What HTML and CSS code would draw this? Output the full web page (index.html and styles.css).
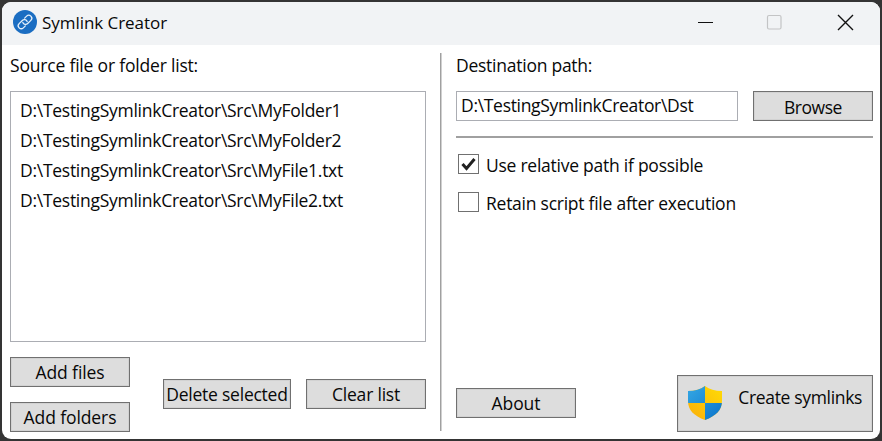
FILE: index.html
```html
<!DOCTYPE html>
<html lang="en">
<head>
<meta charset="utf-8">
<title>Symlink Creator</title>
<link rel="stylesheet" href="styles.css">
</head>
<body>
<div class="window">
  <header class="titlebar">
    <svg class="app-icon" width="24" height="24" viewBox="0 0 24 24">
      <circle cx="12" cy="12" r="12" fill="#1a6dc2"/>
      <g transform="rotate(-45 12 12)" fill="none" stroke="#e4effa" stroke-width="1.3" stroke-linecap="round">
        <path d="M9.500 15H6.700a3 3 0 0 1 0-6h4.500a3 3 0 0 1 2.700 4.200"/>
        <path d="M14.500 9h2.800a3 3 0 0 1 0 6h-4.500a3 3 0 0 1-2.700-4.200"/>
      </g>
    </svg>
    <h1 class="title">Symlink Creator</h1>
    <svg class="controls" width="160" height="20" viewBox="0 0 160 20" fill="none">
      <path d="M0 10.5h15" stroke="#111"/>
      <rect x="69.5" y="3.5" width="13.5" height="13.5" rx="1.5" stroke="#c3c4c5" stroke-width="1.2"/>
      <path d="M140 3l15 15M155 3l-15 15" stroke="#111" stroke-width="1.4"/>
    </svg>
  </header>
  <main class="content">
    <section class="sources">
      <div class="label source-label">Source file or folder list:</div>
      <ul class="list">
        <li>D:\TestingSymlinkCreator\Src\MyFolder1</li>
        <li>D:\TestingSymlinkCreator\Src\MyFolder2</li>
        <li>D:\TestingSymlinkCreator\Src\MyFile1.txt</li>
        <li>D:\TestingSymlinkCreator\Src\MyFile2.txt</li>
      </ul>
      <div class="list-actions">
        <div class="add-actions">
          <button>Add files</button>
          <button>Add folders</button>
        </div>
        <button class="delete">Delete selected</button>
        <button class="clear">Clear list</button>
      </div>
    </section>
    <div class="divider"></div>
    <section class="destination">
      <div class="label">Destination path:</div>
      <div class="path-row">
        <div class="field">D:\TestingSymlinkCreator\Dst</div>
        <button class="browse">Browse</button>
      </div>
      <div class="rule"></div>
      <div class="option">
        <span class="box"><svg width="19" height="18" viewBox="0 0 19 18"><path d="M3.5 9l4 4.5L15.500 4" fill="none" stroke="#212121" stroke-width="3"/></svg></span>
        <span class="option-text">Use relative path if possible</span>
      </div>
      <div class="option">
        <span class="box"></span>
        <span class="option-text">Retain script file after execution</span>
      </div>
      <div class="footer">
        <button class="about">About</button>
        <button class="create">
          <svg width="34" height="34" viewBox="0 0 34 34">
            <defs>
              <clipPath id="shield"><path d="M17 0C12.500 3.500 7 5 0 5V15C0 24 6 30 17 34C28 30 34 24 34 15V5C27 5 21.500 3.500 17 0Z"/></clipPath>
              <linearGradient id="blue" x2="1" y2="1"><stop stop-color="#35a8e4"/><stop offset="1" stop-color="#0872cb"/></linearGradient>
              <linearGradient id="gold" x1="1" x2="0" y2="1"><stop stop-color="#ffdb05"/><stop offset="1" stop-color="#f9ae0c"/></linearGradient>
            </defs>
            <g clip-path="url(#shield)">
              <path d="M0 0H34V34H0Z" fill="url(#gold)"/>
              <path d="M0 0H17V17H34V34H17V17H0Z" fill="url(#blue)"/>
            </g>
          </svg>
          <span>Create symlinks</span>
        </button>
      </div>
    </section>
  </main>
</div>
</body>
</html>
```
FILE: styles.css
```css
* { box-sizing: border-box; }
body {
  margin: 0;
  height: 441px;
  padding: 2px;
  overflow: hidden;
  background: #343434;
  color: #080808;
  font: 17.5px/24px "Open Sans", "Noto Sans", sans-serif;
  letter-spacing: -0.25px;
  white-space: nowrap;
}
.window {
  height: 437px;
  overflow: hidden;
  border-radius: 9px;
  background: #fff;
}
.titlebar {
  display: flex;
  align-items: center;
  height: 43px;
  padding: 0 22px 3px 11px;
  background: #f1f3f5;
}
.title {
  flex: 1;
  margin: 1px 0 0 5px;
  font-size: 17px;
  font-weight: 400;
  letter-spacing: -0.05px;
}
.content {
  display: flex;
  height: 394px;
  padding: 8px 7px 8px 8px;
}
.sources { width: 416px; }
.label { height: 38px; }
.source-label { letter-spacing: -0.19px; }
.list {
  height: 251px;
  margin: 0 0 15px;
  padding: 3px 9px;
  border: 1px solid #abadb3;
  letter-spacing: -0.27px;
  list-style: none;
}
.list li { height: 30px; line-height: 30px; }
.list-actions { display: flex; }
.add-actions {
  display: flex;
  flex-direction: column;
  gap: 15px;
  margin-right: 33px;
}
button {
  display: flex;
  align-items: center;
  justify-content: center;
  width: 120px;
  height: 30px;
  padding: 0;
  border: 1px solid #707070;
  box-shadow: inset 0 0 0 1px #d2d2d2;
  background: #ddd;
  color: inherit;
  font: inherit;
  letter-spacing: -0.1px;
}
.list-actions > button { margin-top: 22px; }
.list-actions > .delete {
  width: 128px;
  margin-right: 15px;
  letter-spacing: -0.24px;
}
.clear { letter-spacing: -0.2px; }
.divider {
  width: 1px;
  height: 378px;
  margin: 0 15px 0 14px;
  background: #a0a0a0;
  box-shadow: 1px 0 #d0d0d0;
}
.destination {
  display: flex;
  flex: 1;
  flex-direction: column;
}
.path-row { display: flex; justify-content: space-between; }
.field {
  width: 282px;
  height: 30px;
  padding-left: 4px;
  border: 1px solid #abadb3;
  letter-spacing: -0.31px;
  line-height: 27px;
}
.browse { padding-top: 2px; letter-spacing: -0.45px; }
.rule { height: 2px; margin: 15px 0 16px; background: #a0a0a0; }
.option {
  display: flex;
  align-items: center;
  height: 22px;
  margin-bottom: 16px;
  padding-left: 2px;
}
.box {
  width: 21px;
  height: 20px;
  margin-right: 7px;
  border: 1px solid #707070;
}
.box svg { display: block; }
.option .box { margin-top: -2px; }
.option-text { margin-top: -1px; }
.footer {
  display: flex;
  align-items: flex-start;
  justify-content: space-between;
  height: 56px;
  margin-top: auto;
}
.about { margin-top: 13px; }
.create {
  width: 196px;
  height: 57px;
  padding: 0 10px;
  justify-content: space-between;
  letter-spacing: -0.34px;
}
.create svg { margin-top: -1px; }
.create span { margin-top: -13px; }
```
